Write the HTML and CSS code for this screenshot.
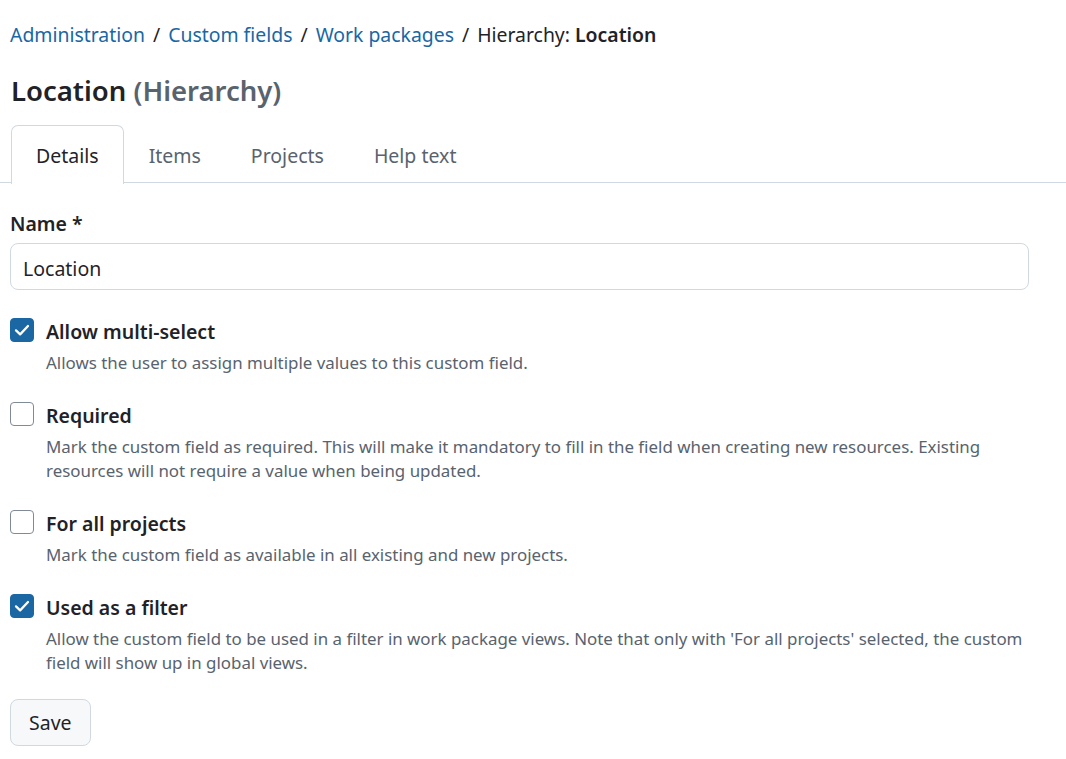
FILE: index.html
```html
<!DOCTYPE html>
<html>
<head>
<meta charset="utf-8">
<link rel="stylesheet" href="styles.css">
</head>
<body>
<div class="page">
  <nav class="breadcrumb">
    <a href="#">Administration</a><span class="sep">/</span><a href="#">Custom fields</a><span class="sep">/</span><a href="#">Work packages</a><span class="sep">/</span><span class="current">Hierarchy: <strong>Location</strong></span>
  </nav>
  <h1 class="title">Location <span class="muted">(Hierarchy)</span></h1>
  <div class="tabs">
    <div class="tab active">Details</div>
    <div class="tab">Items</div>
    <div class="tab">Projects</div>
    <div class="tab">Help text</div>
  </div>
  <form class="form">
    <label class="field-label">Name *</label>
    <div class="input">Location</div>

    <div class="check">
      <span class="box checked"><svg viewBox="0 0 16 16"><path d="M3.2 8.3 L6.5 11.5 L12.8 4.8" fill="none" stroke="#fff" stroke-width="1.8" stroke-linecap="round" stroke-linejoin="round"/></svg></span>
      <div class="check-body">
        <div class="check-label">Allow multi-select</div>
        <div class="check-desc">Allows the user to assign multiple values to this custom field.</div>
      </div>
    </div>

    <div class="check">
      <span class="box"></span>
      <div class="check-body">
        <div class="check-label">Required</div>
        <div class="check-desc">Mark the custom field as required. This will make it mandatory to fill in the field when creating new resources. Existing resources will not require a value when being updated.</div>
      </div>
    </div>

    <div class="check">
      <span class="box"></span>
      <div class="check-body">
        <div class="check-label">For all projects</div>
        <div class="check-desc">Mark the custom field as available in all existing and new projects.</div>
      </div>
    </div>

    <div class="check">
      <span class="box checked"><svg viewBox="0 0 16 16"><path d="M3.2 8.3 L6.5 11.5 L12.8 4.8" fill="none" stroke="#fff" stroke-width="1.8" stroke-linecap="round" stroke-linejoin="round"/></svg></span>
      <div class="check-body">
        <div class="check-label">Used as a filter</div>
        <div class="check-desc">Allow the custom field to be used in a filter in work package views. Note that only with 'For all projects' selected, the custom field will show up in global views.</div>
      </div>
    </div>

    <div class="actions"><button type="button" class="btn">Save</button></div>
  </form>
</div>
</body>
</html>
```
FILE: styles.css
```css
html, body {
  margin: 0;
  padding: 0;
  background: #fff;
}
body {
  font-family: "Noto Sans", "Open Sans", sans-serif;
  color: #1f2328;
}
.page {
  padding: 20px 0 0 10px;
}
.breadcrumb {
  font-size: 19.4px;
  line-height: 30px;
  white-space: nowrap;
}
.breadcrumb a {
  color: #1a67a3;
  text-decoration: none;
}
.breadcrumb .sep {
  color: #1f2328;
  margin: 0 8px;
}
.breadcrumb strong {
  font-weight: 600;
}
.title {
  margin: 21px 0 0 1px;
  font-size: 27.5px;
  line-height: 40px;
  font-weight: 600;
}
.title .muted {
  color: #59636e;
}
.tabs {
  margin: 14px 0 0 -10px;
  padding-left: 11px;
  display: flex;
  border-bottom: 1px solid #d1d9e0;
  height: 57px;
}
.tab {
  padding: 0 24px;
  font-size: 19.5px;
  line-height: 60px;
  color: #59636e;
  border: 1px solid transparent;
  border-bottom: none;
}
.tab.active {
  color: #1f2328;
  border-color: #d1d9e0;
  border-radius: 7px 7px 0 0;
  background: #fff;
  height: 58px;
}
.form {
  width: 1020px;
  display: flex;
  flex-direction: column;
}
.field-label {
  margin-top: 26px;
  font-size: 19.5px;
  line-height: 30px;
  font-weight: 600;
}
.input {
  margin-top: 4px;
  height: 45px;
  border: 1px solid #d1d9e0;
  border-radius: 8px;
  padding: 0 12px;
  font-size: 19.5px;
  line-height: 49px;
  box-sizing: content-box;
  width: 993px;
}
.check {
  display: flex;
  gap: 12px;
  margin-top: 25px;
}
.check + .check {
  margin-top: 24px;
}
.box {
  flex: 0 0 auto;
  width: 22px;
  height: 22px;
  margin-top: 3px;
  border: 1px solid #818b98;
  border-radius: 4px;
  display: flex;
  align-items: center;
  justify-content: center;
  background: #fff;
}
.box.checked {
  background: #1a67a3;
  border-color: #1a67a3;
}
.box svg {
  width: 20px;
  height: 20px;
}
.check-body {
  flex: 1;
}
.check-label {
  padding-top: 2px;
  font-size: 19.5px;
  line-height: 30px;
  font-weight: 600;
}
.check-desc {
  margin-top: 4px;
  font-size: 16.9px;
  line-height: 24px;
  color: #59636e;
}
.actions {
  margin-top: 24px;
}
.btn {
  font-family: inherit;
  font-size: 19.5px;
  color: #1f2328;
  background: #f6f8fa;
  border: 1px solid #d1d9e0;
  border-radius: 8px;
  height: 47px;
  padding: 0 18px;
}
```
